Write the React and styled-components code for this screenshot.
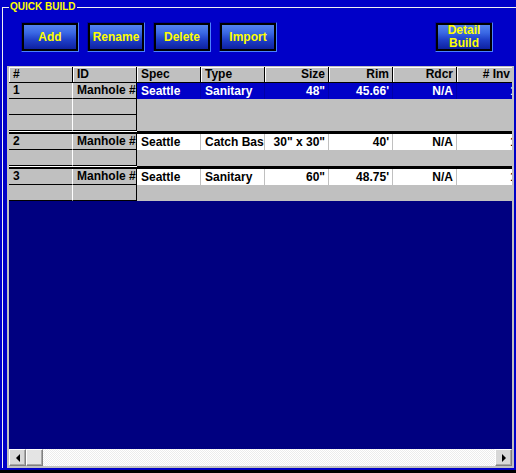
import styled, { createGlobalStyle } from 'styled-components';

const GlobalStyle = createGlobalStyle`
  html, body {
    margin: 0;
    padding: 0;
    background: #0000c8;
  }
  body {
    font-family: "Liberation Sans", Arial, sans-serif;
  }
`;

const columns = [
  { key: 'spec', label: 'Spec', align: 'left' },
  { key: 'type', label: 'Type', align: 'left' },
  { key: 'size', label: 'Size', align: 'right' },
  { key: 'rim', label: 'Rim', align: 'right' },
  { key: 'rdcr', label: 'Rdcr', align: 'right' },
  { key: 'inv', label: '# Inv', align: 'right' },
];

const structures = [
  { num: 1, id: 'Manhole #1', spec: 'Seattle', type: 'Sanitary', size: '48"', rim: "45.66'", rdcr: 'N/A', inv: '1', extra: 2, selected: true },
  { num: 2, id: 'Manhole #2', spec: 'Seattle', type: 'Catch Basin', size: '30" x 30"', rim: "40'", rdcr: 'N/A', inv: '1', extra: 1 },
  { num: 3, id: 'Manhole #3', spec: 'Seattle', type: 'Sanitary', size: '60"', rim: "48.75'", rdcr: 'N/A', inv: '1', extra: 1 },
];

const App = () => {
  return (
    <>
      <GlobalStyle />
      <SPage>
        <SGroupBox>
          <SLegend>QUICK BUILD</SLegend>
          <SToolbar>
            <SButton>Add</SButton>
            <SButton>Rename</SButton>
            <SButton>Delete</SButton>
            <SButton>Import</SButton>
            <SButton $push>
              Detail
              <br />
              Build
            </SButton>
          </SToolbar>
          <SFrame>
            <SGridArea>
              <SHeaderRow>
                <SHeaderCell>#</SHeaderCell>
                <SHeaderCell>ID</SHeaderCell>
                {columns.map((col) => (
                  <SHeaderCell key={col.key} $align={col.align} $last={col.key === 'inv'}>
                    {col.label}
                  </SHeaderCell>
                ))}
              </SHeaderRow>
              {structures.map((s, index) => (
                <div key={s.num}>
                  {index > 0 && <SDivider />}
                  <SGroup>
                    <SKeyCell $edge="#ffffff">{s.num}</SKeyCell>
                    <SKeyCell $edge="#000000">{s.id}</SKeyCell>
                    <SDataRow>
                      {columns.map((col) => (
                        <SDataCell key={col.key} $align={col.align} $selected={s.selected}>
                          {s[col.key]}
                        </SDataCell>
                      ))}
                    </SDataRow>
                    {Array.from({ length: s.extra }).map((_, i) => (
                      <SubRow key={i} />
                    ))}
                    <SDataFill $rows={s.extra} />
                  </SGroup>
                </div>
              ))}
            </SGridArea>
            <SScrollbar>
              <SScrollButton>
                <SArrow $dir="left" />
              </SScrollButton>
              <SScrollButton $thumb />
              <STrack />
              <SScrollButton>
                <SArrow $dir="right" />
              </SScrollButton>
            </SScrollbar>
          </SFrame>
        </SGroupBox>
        <SBottomEdge />
      </SPage>
    </>
  );
};

const SubRow = () => (
  <>
    <SKeyCell $edge="#ffffff" />
    <SKeyCell $edge="#000000" />
  </>
);

export default App;

const SPage = styled.div`
  width: 516px;
  height: 473px;
  display: flex;
  flex-direction: column;
  overflow: hidden;
  background: #0000c8;
`;

const SGroupBox = styled.fieldset`
  flex: 1;
  min-width: 0;
  margin: 0 0 0 2px;
  padding: 0;
  border: 1px solid #f0f0f0;
  border-right: none;
  border-bottom: none;
`;

const SLegend = styled.legend`
  margin-left: 6px;
  padding: 0 1px;
  font-size: 10px;
  font-weight: bold;
  line-height: 14px;
  color: #ffff00;
`;

const SToolbar = styled.div`
  display: flex;
  gap: 8px;
  padding: 8px 23px 0 18px;
`;

const SButton = styled.button`
  width: 58px;
  height: 30px;
  box-sizing: border-box;
  margin-left: ${(props) => (props.$push ? 'auto' : '0')};
  padding: 0;
  border: 1px solid;
  border-color: #0000a0 #4a80ff #4a80ff #0000a0;
  background: linear-gradient(#5a8af2 0%, #3a68e4 35%, #1f40c8 60%, #0a1a98 100%);
  box-shadow: inset 0 0 0 2px #000;
  font-family: "Liberation Sans", Arial, sans-serif;
  font-size: 12px;
  font-weight: bold;
  line-height: 13px;
  color: #ffff00;
  cursor: pointer;
`;

const SFrame = styled.div`
  height: 402px;
  box-sizing: border-box;
  margin: 14px 2px 0 4px;
  display: flex;
  flex-direction: column;
  border: 2px solid #c0c0c0;
  border-top-width: 1px;
  background: #000080;
  overflow: hidden;
`;

const SGridArea = styled.div`
  flex: 1;
  overflow: hidden;
`;

const SHeaderRow = styled.div`
  display: grid;
  grid-template-columns: repeat(8, 64px);
`;

const SHeaderCell = styled.div`
  height: 16px;
  box-sizing: border-box;
  padding: 0 ${(props) => (props.$last ? '10px' : '3px')} 0 4px;
  background: #c0c0c0;
  border-right: 1px solid #000;
  border-bottom: 1px solid #000;
  box-shadow: inset 1px 1px 0 #fff;
  font-size: 12px;
  font-weight: bold;
  line-height: 15px;
  color: #000;
  text-align: ${(props) => props.$align || 'left'};
  white-space: nowrap;
  overflow: hidden;
`;

const SDivider = styled.div`
  height: 3px;
  width: 512px;
  background: linear-gradient(#fff 0 1px, #000 1px) 0 0 / 128px 100% no-repeat, #000;
`;

const SGroup = styled.div`
  display: grid;
  grid-template-columns: 64px 64px 384px;
  grid-auto-rows: 16px;
`;

const SKeyCell = styled.div`
  box-sizing: border-box;
  padding-left: 4px;
  background: #c0c0c0;
  border-bottom: 1px solid #000;
  border-right: 1px solid ${(props) => props.$edge};
  font-size: 12px;
  font-weight: bold;
  line-height: 15px;
  color: #000;
  white-space: nowrap;
  overflow: hidden;
`;

const SDataRow = styled.div`
  display: grid;
  grid-template-columns: repeat(6, 64px);
`;

const SDataCell = styled.div`
  box-sizing: border-box;
  padding: 0 3px 0 4px;
  background: ${(props) => (props.$selected ? '#0000c8' : '#fff')};
  border-right: 1px solid ${(props) => (props.$selected ? '#0000a8' : '#c0c0c0')};
  font-size: 12px;
  font-weight: bold;
  line-height: 16px;
  color: ${(props) => (props.$selected ? '#fff' : '#000')};
  text-align: ${(props) => props.$align};
  white-space: nowrap;
  overflow: hidden;
`;

const SDataFill = styled.div`
  grid-column: 3;
  grid-row: 2 / span ${(props) => props.$rows};
  background: #c0c0c0;
`;

const SScrollbar = styled.div`
  display: flex;
  height: 17px;
`;

const SScrollButton = styled.div`
  width: 17px;
  height: 17px;
  box-sizing: border-box;
  display: flex;
  align-items: center;
  justify-content: center;
  border: 1px solid;
  border-color: #fff #808080 #808080 #fff;
  box-shadow: inset -1px -1px 0 #a8a8a8;
  background: ${(props) => (props.$thumb ? '#e4e4e4' : '#d8d8d8')};
`;

const SArrow = styled.span`
  width: 0;
  height: 0;
  border-top: 4px solid transparent;
  border-bottom: 4px solid transparent;
  ${(props) => (props.$dir === 'left' ? 'border-right: 4px solid #000;' : 'border-left: 4px solid #000;')}
`;

const STrack = styled.div`
  flex: 1;
  background: repeating-conic-gradient(#ffffff 0 25%, #ececec 0 50%) 0 0 / 2px 2px;
`;

const SBottomEdge = styled.div`
  height: 3px;
  margin-top: 2px;
  background: #000;
`;
